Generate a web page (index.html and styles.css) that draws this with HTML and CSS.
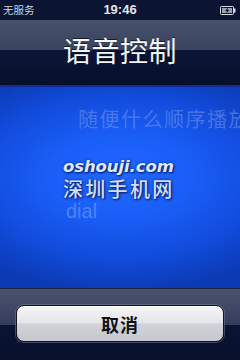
FILE: index.html
```html
<!DOCTYPE html>
<html>
<head>
<meta charset="utf-8">
<link rel="stylesheet" href="styles.css">
</head>
<body>
<div class="screen">
  <div class="status">
    <span class="carrier">无服务</span>
    <span class="time">19:46</span>
    <span class="battery">
      <svg width="16" height="9" viewBox="0 0 16 9">
        <rect x="0.5" y="0.5" width="13" height="8" rx="1" fill="none" stroke="#d8dce6" stroke-width="1"/>
        <rect x="14" y="2.5" width="1.5" height="4" fill="#d8dce6"/>
        <rect x="2" y="2" width="10" height="5" fill="#9aa0b0"/>
        <path d="M8 1.5 L5 5 L7 5 L6 7.5 L9.5 4 L7.5 4 Z" fill="#0b1433"/>
      </svg>
    </span>
  </div>
  <div class="header">
    <h1 class="title">语音控制</h1>
  </div>
  <div class="stage">
    <div class="hint">随便什么顺序播放</div>
    <div class="mark">
      <div class="mark-url">oshouji.com</div>
      <div class="mark-name">深圳手机网</div>
    </div>
    <div class="dial">dial</div>
  </div>
  <div class="footer">
    <button class="cancel">取消</button>
  </div>
</div>
</body>
</html>
```
FILE: styles.css
```css
html, body {
  margin: 0;
  padding: 0;
  background: #08102c;
}
.screen {
  width: 240px;
  height: 360px;
  display: flex;
  flex-direction: column;
  overflow: hidden;
  font-family: "Liberation Sans", "Noto Sans CJK SC", sans-serif;
}
.status {
  height: 20px;
  flex: none;
  background: #0b1433;
  display: flex;
  align-items: center;
  justify-content: space-between;
  padding: 0 3px 0 3px;
  color: #cfd3de;
  font-size: 12px;
  position: relative;
}
.carrier {
  font-family: "Noto Sans CJK SC", sans-serif;
  font-size: 10.5px;
  line-height: 20px;
  position: relative;
  z-index: 1;
}
.time {
  position: absolute;
  left: 0;
  right: 0;
  text-align: center;
  font-weight: bold;
  font-size: 13px;
  line-height: 20px;
  color: #e2e5ee;
}
.battery {
  display: flex;
  align-items: center;
  margin-right: 1px;
}
.header {
  height: 65px;
  flex: none;
  background: linear-gradient(#49526d 0%, #39425e 46%, #0a1536 46%, #070f2c 100%);
  display: flex;
  justify-content: center;
  align-items: flex-start;
}
.title {
  margin: 10px 0 0 0;
  font-family: "Noto Sans CJK SC", sans-serif;
  font-weight: normal;
  font-size: 28px;
  line-height: 40px;
  color: #f4f6fa;
  letter-spacing: 0.5px;
  text-shadow: 0 -1px 0 rgba(0,0,0,0.6);
}
.stage {
  height: 203px;
  flex: none;
  overflow: hidden;
  background: radial-gradient(ellipse 200px 115px at 120px 92px, #2168ff 0%, #1a5ef8 35%, #124cdc 70%, #0b3ab4 100%);
  box-shadow: inset 0 2px 0 #0d2f94;
}
.hint {
  margin: 22px 0 0 78px;
  white-space: nowrap;
  font-family: "Noto Sans CJK SC", sans-serif;
  font-size: 20px;
  line-height: 24px;
  letter-spacing: 1.5px;
  color: rgba(150, 170, 235, 0.42);
}
.mark {
  margin: 26px 0 0 63px;
  color: #dfe8ff;
  text-shadow: 0 0 3px #0a2a90, 1px 1px 2px #061a60;
}
.mark-url {
  font-family: "DejaVu Sans", sans-serif;
  font-weight: bold;
  font-style: italic;
  font-size: 16.5px;
  line-height: 20px;
  letter-spacing: -0.1px;
}
.mark-name {
  margin-top: 1px;
  font-family: "Noto Sans CJK SC", sans-serif;
  font-weight: 500;
  font-size: 20px;
  line-height: 22px;
  letter-spacing: 2.3px;
  color: #d3ddf6;
}
.dial {
  margin: 1px 0 0 66px;
  font-family: "Liberation Sans", sans-serif;
  font-size: 20px;
  line-height: 20px;
  color: rgba(150, 180, 255, 0.45);
}
.footer {
  flex: 1;
  background: linear-gradient(#4a526e 0%, #343d5a 50%, #0a1434 50%, #08102c 100%);
  border-top: 1px solid #1a2340;
  padding: 16px 16px 0 16px;
}
.cancel {
  display: block;
  width: 208px;
  height: 37px;
  margin: 0;
  padding: 0;
  border: 1.5px solid #15171c;
  border-radius: 8px;
  background: linear-gradient(#f6f6f8 0%, #e4e5ea 48%, #d0d2d8 52%, #c6c8ce 100%);
  box-shadow: 0 0 0 1px rgba(120,130,160,0.5), inset 0 1px 0 #ffffff;
  font-family: "Noto Sans CJK SC", sans-serif;
  font-weight: bold;
  font-size: 18px;
  line-height: 34px;
  color: #111;
  letter-spacing: 1px;
}
```
